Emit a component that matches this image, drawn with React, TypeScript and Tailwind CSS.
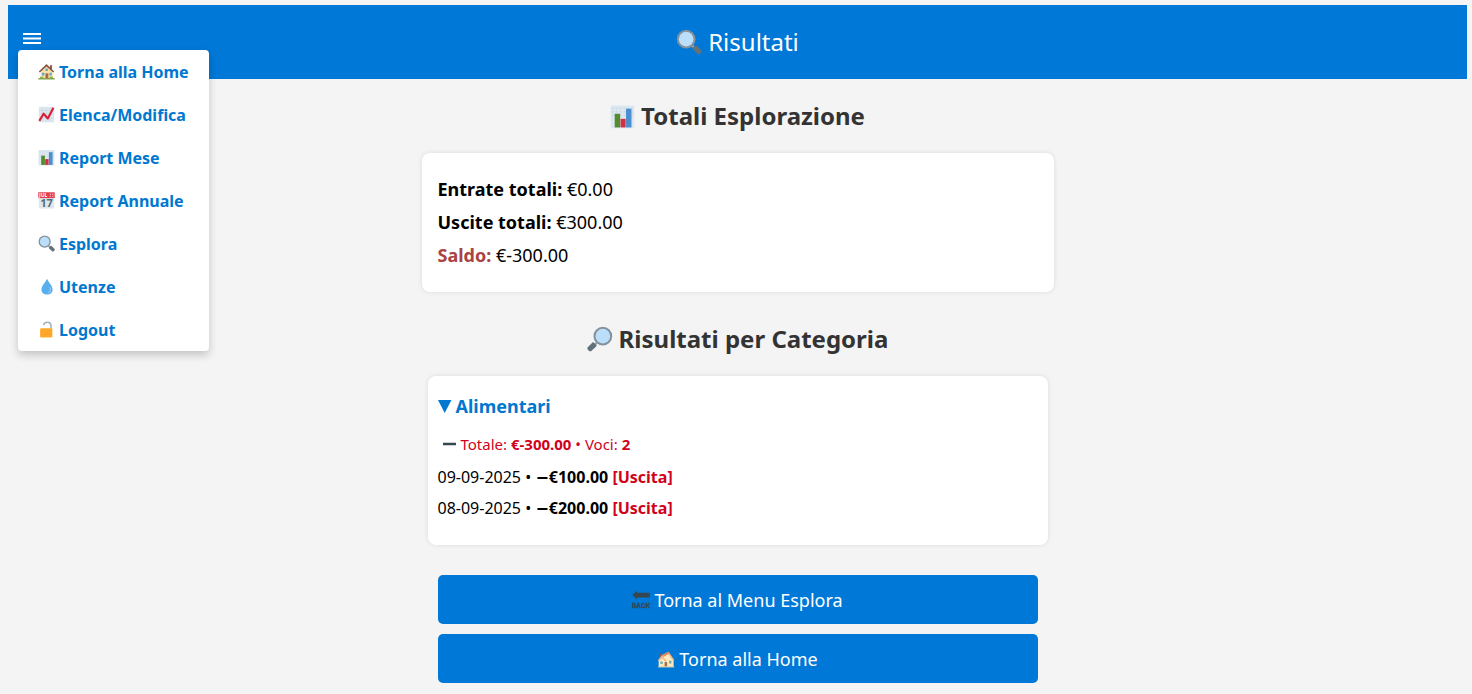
import { useState, type ReactNode } from "react";

function Icon({ className, children }: { className: string; children: ReactNode }) {
  return (
    <svg viewBox="0 0 64 64" aria-hidden="true" className={"inline-block shrink-0 " + className}>
      {children}
    </svg>
  );
}

function Magnifier({ className, flipped = false }: { className: string; flipped?: boolean }) {
  return (
    <Icon className={className}>
      <g transform={flipped ? "translate(64 0) scale(-1 1)" : undefined}>
        <path d="M41 38l6 6-4 4-6-6z" fill="#9aa5ad" />
        <path d="M41 47l6-6c1-1 3-1 4 0l10 10c3 3 3 5 0 8l-1 1c-3 3-5 3-8 0L41 50c-1-1-1-2 0-3z" fill="#62727a" />
        <circle cx="25" cy="25" r="23" fill="#84929c" />
        <circle cx="25" cy="25" r="18" fill="#bbdefb" />
      </g>
    </Icon>
  );
}

function BarChart({ className }: { className: string }) {
  return (
    <Icon className={className}>
      <rect x="2" y="4" width="60" height="58" rx="2" fill="#dce7f0" />
      <path d="M5 11h54M5 20h54M5 29h54" stroke="#c8d5df" strokeWidth="3" strokeDasharray="4 6" />
      <rect x="12" y="25" width="14" height="35" fill="#558b2f" />
      <rect x="27" y="38" width="13" height="22" fill="#d32f43" />
      <rect x="41" y="12" width="14" height="48" fill="#4c8fd0" />
    </Icon>
  );
}

function TrendChart({ className }: { className: string }) {
  return (
    <Icon className={className}>
      <rect x="3" y="3" width="58" height="58" rx="2" fill="#dce7ee" />
      <path d="M4 16h56M4 30h56M4 45h56M17 4v56M31 4v56M46 4v56" stroke="#c3d0da" strokeWidth="1.5" />
      <path d="M5 56l16-27 16 18L58 7" fill="none" stroke="#dc1f38" strokeWidth="8" strokeLinejoin="round" />
    </Icon>
  );
}

function Calendar({ className }: { className: string }) {
  return (
    <Icon className={className}>
      <path d="M3 19h58v38q0 5-5 5H8q-5 0-5-5z" fill="#e0e7eb" />
      <path d="M1 1h62v22H1z" fill="#e23b4b" />
      <text x="4" y="19" fontSize="19" fontWeight="700" fontFamily="Noto Sans, sans-serif" fill="#fff">JUL</text>
      <path d="M44 6h5v5h-5zM53 6h5v5h-5zM44 14h5v5h-5zM53 14h5v5h-5z" fill="#f7a2aa" />
      <text x="32" y="57" textAnchor="middle" fontSize="42" fontWeight="700" fontFamily="Noto Sans, sans-serif" fill="#546e7a">17</text>
    </Icon>
  );
}

function GardenHouse({ className }: { className: string }) {
  return (
    <Icon className={className}>
      <path d="M45 8h8v16h-8z" fill="#9b5b4f" />
      <path d="M10 30L32 9l23 22v27H10z" fill="#ffe0a3" />
      <path d="M3 32L32 4l29 28-4 4-25-23L7 36z" fill="#85574a" />
      <path d="M28 39h11v19H28z" fill="#a36b4f" />
      <path d="M15 37h9v10h-9zM43 37h9v10h-9zM28 21h9v9h-9z" fill="#5ca9c9" />
      <path d="M8 52h12v6H8zM44 52h12v6H44z" fill="#7cb342" />
      <path d="M1 57h62v5H1z" fill="#7a9b3d" />
    </Icon>
  );
}

function House({ className }: { className: string }) {
  return (
    <Icon className={className}>
      <path d="M9 12h9v16H9z" fill="#7b5960" />
      <path d="M6 36L20 19 42 9l17 26v25H6z" fill="#ffe9bd" />
      <path d="M18 18L41 6l20 29-5 2-16-23-17 12 11 13-4 3-11-13L7 39l-4-3z" fill="#efb68c" />
      <path d="M18 18L41 6l4 6-22 11z" fill="#e0865f" />
      <path d="M27 43h9v17h-9z" fill="#a46b4e" />
      <path d="M12 41h8v9h-8zM43 38h8v10h-8z" fill="#65adb9" />
      <path d="M4 58h57v4H4z" fill="#ddd2aa" />
    </Icon>
  );
}

function Drop({ className }: { className: string }) {
  return (
    <Icon className={className}>
      <path d="M34 3C29 16 13 29 13 43c0 12 9 19 21 19s21-7 21-19C55 29 39 16 34 3z" fill="#5aaeee" />
      <path d="M45 36c5 9 1 17-7 20" fill="none" stroke="#8dcbf7" strokeWidth="4" strokeLinecap="round" />
    </Icon>
  );
}

function OpenLock({ className }: { className: string }) {
  return (
    <Icon className={className}>
      <path d="M21 15C25 2 48 0 49 17v12" fill="none" stroke="#a4b4bf" strokeWidth="6" />
      <rect x="8" y="27" width="46" height="35" rx="5" fill="#ffa92c" />
      <path d="M10 38h42M10 50h42" stroke="#f79b20" strokeWidth="2" />
    </Icon>
  );
}

function BackArrow({ className }: { className: string }) {
  return (
    <Icon className={className}>
      <path d="M1 14L18 0v6h45v17H18v6z" fill="#37474f" />
      <text
        x="32"
        y="60"
        textAnchor="middle"
        fontSize="23"
        fontWeight="700"
        fontFamily="Liberation Sans, sans-serif"
        fill="#37474f"
        stroke="#37474f"
        strokeWidth="1"
      >
        BACK
      </text>
    </Icon>
  );
}

const menuItems = [
  { label: "Torna alla Home", icon: GardenHouse },
  { label: "Elenca/Modifica", icon: TrendChart },
  { label: "Report Mese", icon: BarChart },
  { label: "Report Annuale", icon: Calendar },
  { label: "Esplora", icon: Magnifier },
  { label: "Utenze", icon: Drop },
  { label: "Logout", icon: OpenLock },
];

const entries = [
  { date: "09-09-2025", amount: "€100.00" },
  { date: "08-09-2025", amount: "€200.00" },
];

export default function App() {
  const [menuOpen, setMenuOpen] = useState(true);
  const [expanded, setExpanded] = useState(true);

  return (
    <div className="min-h-screen bg-[#f4f4f4] pt-[5px] pr-[5px] pb-[11px] pl-2 font-['Noto_Sans',sans-serif] text-black">
      <header className="relative flex h-[74px] items-center justify-center bg-[#0078d7] text-white">
        <button
          type="button"
          aria-label="Menu"
          aria-expanded={menuOpen}
          onClick={() => setMenuOpen(!menuOpen)}
          className="absolute top-6 left-[15px] flex h-5 w-[18px] items-center"
        >
          <svg viewBox="0 0 18 12" className="h-3 w-[18px]" aria-hidden="true">
            <path d="M0 1h18M0 5.5h18M0 10h18" stroke="white" strokeWidth="2" />
          </svg>
        </button>
        <h1 className="flex items-center gap-1.5 text-2xl font-normal">
          <Magnifier className="size-[26px]" />
          Risultati
        </h1>
        {menuOpen && (
          <nav className="absolute top-[45px] left-2.5 z-10 rounded-[4px] bg-white shadow-[0_4px_8px_rgba(0,0,0,0.2)]">
            {menuItems.map(({ label, icon: Glyph }) => (
              <a key={label} href="#" className="flex h-[43px] items-center gap-1 px-5 font-bold text-[#0078d0]">
                <Glyph className="size-[17px]" />
                {label}
              </a>
            ))}
          </nav>
        )}
      </header>

      <main className="flex flex-col items-center">
        <h2 className="my-5 flex h-[34px] items-center gap-1.5 text-2xl font-bold text-[#333]">
          <BarChart className="size-[25px]" />
          Totali Esplorazione
        </h2>
        <section className="w-full max-w-[632px] rounded-lg bg-white px-4 py-5 text-lg leading-[33px] shadow-[0_0_5px_rgba(0,0,0,0.1)]">
          <p><strong>Entrate totali:</strong> €0.00</p>
          <p><strong>Uscite totali:</strong> €300.00</p>
          <p><strong className="text-[#a94442]">Saldo:</strong> €-300.00</p>
        </section>

        <h2 className="mt-[30px] mb-5 flex h-[34px] items-center gap-1.5 text-2xl font-bold text-[#333]">
          <Magnifier className="size-[26px]" flipped />
          Risultati per Categoria
        </h2>
        <section className="w-full max-w-[620px] rounded-lg bg-white px-2.5 pt-[18px] pb-[21px] shadow-[0_0_5px_rgba(0,0,0,0.1)]">
          <button
            type="button"
            aria-expanded={expanded}
            onClick={() => setExpanded(!expanded)}
            className="flex h-6 items-center gap-1 text-lg font-bold text-[#0078d0]"
          >
            <svg viewBox="0 0 14 14" className="size-3.5" aria-hidden="true">
              <path d="M0 1h13.5L6.7 14z" fill="currentColor" />
            </svg>
            Alimentari
          </button>
          <p className="mt-[15px] mb-[7px] flex h-[22px] items-center gap-1 px-1 text-[15px] text-[#d0021b]">
            <svg viewBox="0 0 15 4" className="h-1 w-[15px]" aria-hidden="true">
              <path d="M1 2h13" stroke="#37474f" strokeWidth="2.5" />
            </svg>
            <span>Totale: <strong>€-300.00</strong> • Voci: <strong>2</strong></span>
          </p>
          {expanded && (
            <ul className="leading-[31px]">
              {entries.map(({ date, amount }) => (
                <li key={date} className="h-[31px]">
                  {date} •{" "}
                  <strong>
                    <span className="font-['DejaVu_Sans',sans-serif]">−</span>
                    {amount}
                  </strong>{" "}
                  <strong className="text-[#d0021b]">[Uscita]</strong>
                </li>
              ))}
            </ul>
          )}
        </section>

        <div className="mt-[30px] flex w-full max-w-[600px] flex-col gap-2.5 text-lg text-white">
          <a href="#" className="flex h-[49px] items-center justify-center gap-1 rounded-[5px] bg-[#0078d7]">
            <BackArrow className="size-[18px]" />
            Torna al Menu Esplora
          </a>
          <a href="#" className="flex h-[49px] items-center justify-center gap-1 rounded-[5px] bg-[#0078d7]">
            <House className="size-[18px]" />
            Torna alla Home
          </a>
        </div>
      </main>
    </div>
  );
}
